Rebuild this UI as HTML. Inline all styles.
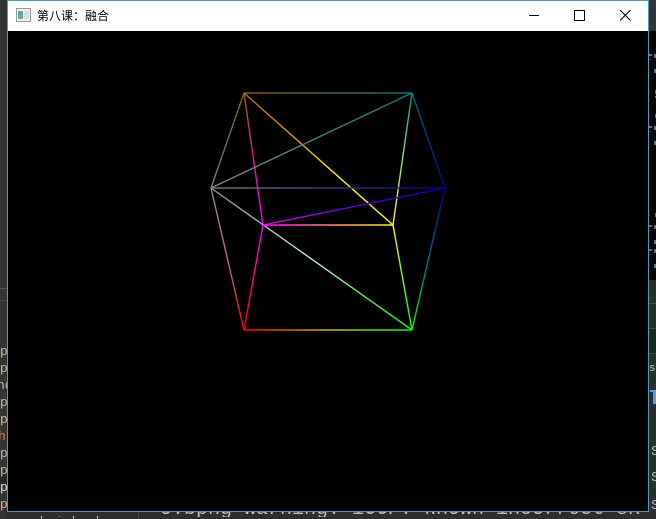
<!DOCTYPE html>
<html><head><meta charset="utf-8">
<style>
html,body{margin:0;padding:0;background:#2d2d2d;width:656px;height:519px;overflow:hidden;}
#w{position:relative;width:656px;height:519px;overflow:hidden;font-family:"Liberation Sans","Noto Sans CJK SC",sans-serif;}
.a{position:absolute;}
.m{font-family:"Liberation Mono",monospace;font-size:13px;line-height:14px;white-space:pre;}
</style></head>
<body>
<div id="w">
<div class="a" style="left:0;top:0;width:7px;height:519px;background:#333;"></div>
<div class="a" style="left:0;top:288px;width:7px;height:1px;background:#555;"></div>
<div class="a" style="left:0;top:300px;width:7px;height:1px;background:#4a4a4a;"></div>
<div class="a" style="left:0;top:470px;width:7px;height:17px;background:#262626;"></div>
<div class="a m" style="left:0;top:345px;color:#d0b898;">p</div>
<div class="a m" style="left:0;top:362px;color:#d0b898;">p</div>
<div class="a m" style="left:-3px;top:379px;color:#d0b898;">nd</div>
<div class="a m" style="left:0;top:396px;color:#d0b898;">p</div>
<div class="a m" style="left:0;top:413px;color:#d0b898;">p</div>
<div class="a m" style="left:-2px;top:430px;color:#c98a50;">h</div>
<div class="a m" style="left:0;top:447px;color:#d0b898;">p</div>
<div class="a m" style="left:0;top:464px;color:#d0b898;">p</div>
<div class="a m" style="left:0;top:481px;color:#f0e0c8;">p</div>
<div class="a m" style="left:0;top:498px;color:#d0b898;">p</div>

<div class="a" style="left:649px;top:0;width:7px;height:31px;background:#333;"></div>
<div class="a" style="left:649px;top:31px;width:7px;height:249px;background:#050505;"></div>
<div class="a" style="left:649px;top:280px;width:7px;height:239px;background:#2d2d2d;"></div>
<div class="a" style="left:649px;top:303px;width:7px;height:1px;background:#484848;"></div>
<div class="a" style="left:649px;top:328px;width:7px;height:25px;background:#242424;"></div>
<div class="a" style="left:649px;top:328px;width:7px;height:1px;background:#4a4a4a;"></div>
<div class="a" style="left:649px;top:353px;width:7px;height:1px;background:#484848;"></div>
<svg class="a" style="left:649px;top:31px;" width="7" height="249">
<g fill="#c03a80"><rect x="0" y="23" width="3" height="2"/><rect x="0" y="95" width="3" height="2"/><rect x="0" y="194" width="3" height="2"/><rect x="0" y="218" width="3" height="2"/></g>
<g fill="#702040"><rect x="0" y="28" width="2" height="1"/><rect x="0" y="100" width="2" height="1"/><rect x="0" y="199" width="2" height="1"/><rect x="0" y="223" width="2" height="1"/></g>
<g fill="#56788f"><rect x="5" y="23" width="2" height="4"/><rect x="5" y="38" width="2" height="4"/><rect x="6" y="59" width="1" height="4"/><rect x="6" y="65" width="1" height="2"/><rect x="6" y="83" width="1" height="4"/><rect x="5" y="95" width="2" height="4"/><rect x="5" y="110" width="2" height="4"/><rect x="6" y="182" width="1" height="4"/><rect x="5" y="194" width="2" height="4"/><rect x="5" y="209" width="2" height="4"/><rect x="5" y="218" width="2" height="4"/><rect x="5" y="233" width="2" height="4"/></g>
</svg>
<div class="a m" style="left:649px;top:362px;color:#c8c8c8;font-size:11px;">s</div>
<div class="a" style="left:650px;top:390px;width:6px;height:2px;background:#5a9fd0;"></div>
<div class="a" style="left:653px;top:390px;width:3px;height:14px;background:#5a9fd0;"></div>
<div class="a m" style="left:651px;top:445px;color:#b8b8b8;font-size:14px;">S</div>
<div class="a m" style="left:651px;top:471px;color:#b8b8b8;font-size:14px;">S</div>
<div class="a m" style="left:651px;top:499px;color:#b8b8b8;font-size:14px;">S</div>

<div class="a" style="left:150px;top:480px;width:490px;height:37px;overflow:hidden;">
<div class="a m" style="left:10px;top:18px;color:#c0c0c0;font-size:20px;line-height:24px;">o:bpng warning: iCCP: known incorrect sRGB</div>
</div>
<div class="a" style="left:41px;top:516px;width:1px;height:3px;background:#ccc;"></div>
<div class="a" style="left:59px;top:516px;width:1px;height:1px;background:#aaa;"></div>
<div class="a" style="left:73px;top:516px;width:1px;height:3px;background:#ccc;"></div>
<div class="a" style="left:97px;top:516px;width:1px;height:3px;background:#ccc;"></div>
<div class="a" style="left:138px;top:512px;width:1px;height:7px;background:#444;"></div>

<div class="a" style="left:7px;top:0;width:642px;height:512px;background:#4a9bc0;"></div>
<div class="a" style="left:8px;top:1px;width:640px;height:30px;background:#fff;"></div>
<div class="a" style="left:8px;top:31px;width:640px;height:480px;background:#000;"></div>

<svg class="a" style="left:16px;top:8px;" width="15" height="14">
<rect x="0.5" y="0.5" width="14" height="13" fill="#f2f2f2" stroke="#9a9a9a"/>
<rect x="2" y="3" width="5" height="8" fill="#5f9fb0"/>
<rect x="2" y="7" width="5" height="4" fill="#6fae80"/>
<rect x="8" y="3" width="5" height="8" fill="#d8dde0"/>
</svg>
<div class="a" style="left:37px;top:8px;font-size:12px;line-height:16px;color:#000;font-family:'Noto Sans CJK SC',sans-serif;white-space:nowrap;">第八课：融合</div>

<svg class="a" style="left:0;top:0;" width="656" height="31" fill="none" stroke="#000">
<path d="M529 15.5H539"/>
<rect x="574.5" y="10.5" width="10" height="10"/>
<path d="M620 10L630.5 20.5M630.5 10L620 20.5" stroke-width="1"/>
</svg>

<svg class="a" style="left:0;top:0;" width="656" height="519" fill="none" stroke-width="1.4">
<defs>
<linearGradient id="ab" gradientUnits="userSpaceOnUse" x1="244" y1="0" x2="412" y2="0"><stop offset="0" stop-color="#8a5c00"/><stop offset=".5" stop-color="#3f6a40"/><stop offset="1" stop-color="#0a7070"/></linearGradient>
<linearGradient id="ac" gradientUnits="userSpaceOnUse" x1="244" y1="93" x2="211" y2="188"><stop offset="0" stop-color="#8a5c0a"/><stop offset=".5" stop-color="#6a6a5a"/><stop offset="1" stop-color="#808080"/></linearGradient>
<linearGradient id="ae" gradientUnits="userSpaceOnUse" x1="244" y1="93" x2="263" y2="225"><stop offset="0" stop-color="#a05a10"/><stop offset=".45" stop-color="#e02080"/><stop offset="1" stop-color="#ff00ff"/></linearGradient>
<linearGradient id="af" gradientUnits="userSpaceOnUse" x1="244" y1="93" x2="393" y2="225"><stop offset="0" stop-color="#a86e00"/><stop offset=".35" stop-color="#e0a000"/><stop offset=".6" stop-color="#ffff00"/><stop offset="1" stop-color="#ffff00"/></linearGradient>
<linearGradient id="bc" gradientUnits="userSpaceOnUse" x1="412" y1="93" x2="211" y2="188"><stop offset="0" stop-color="#0e7a7a"/><stop offset=".5" stop-color="#4a8078"/><stop offset="1" stop-color="#808080"/></linearGradient>
<linearGradient id="bd" gradientUnits="userSpaceOnUse" x1="412" y1="93" x2="445" y2="188"><stop offset="0" stop-color="#006a7a"/><stop offset="1" stop-color="#000a80"/></linearGradient>
<linearGradient id="bf" gradientUnits="userSpaceOnUse" x1="412" y1="93" x2="393" y2="225"><stop offset="0" stop-color="#10907f"/><stop offset=".5" stop-color="#90e080"/><stop offset="1" stop-color="#ffff00"/></linearGradient>
<linearGradient id="cd" gradientUnits="userSpaceOnUse" x1="211" y1="0" x2="445" y2="0"><stop offset="0" stop-color="#777"/><stop offset=".5" stop-color="#3a3a70"/><stop offset="1" stop-color="#000090"/></linearGradient>
<linearGradient id="cg" gradientUnits="userSpaceOnUse" x1="211" y1="188" x2="244" y2="330"><stop offset="0" stop-color="#8a8a8a"/><stop offset=".5" stop-color="#c07070"/><stop offset="1" stop-color="#ff0000"/></linearGradient>
<linearGradient id="ch" gradientUnits="userSpaceOnUse" x1="211" y1="188" x2="412" y2="330"><stop offset="0" stop-color="#808080"/><stop offset=".5" stop-color="#c8f0c8"/><stop offset="1" stop-color="#00ff00"/></linearGradient>
<linearGradient id="de" gradientUnits="userSpaceOnUse" x1="445" y1="188" x2="263" y2="225"><stop offset="0" stop-color="#0000a0"/><stop offset=".5" stop-color="#6000e0"/><stop offset="1" stop-color="#ff00ff"/></linearGradient>
<linearGradient id="dh" gradientUnits="userSpaceOnUse" x1="445" y1="188" x2="412" y2="330"><stop offset="0" stop-color="#000090"/><stop offset=".5" stop-color="#006a80"/><stop offset="1" stop-color="#00ff00"/></linearGradient>
<linearGradient id="ef" gradientUnits="userSpaceOnUse" x1="263" y1="0" x2="393" y2="0"><stop offset="0" stop-color="#ff00ff"/><stop offset="1" stop-color="#ffff00"/></linearGradient>
<linearGradient id="eg" gradientUnits="userSpaceOnUse" x1="263" y1="225" x2="244" y2="330"><stop offset="0" stop-color="#ff00ff"/><stop offset="1" stop-color="#ff0000"/></linearGradient>
<linearGradient id="fh" gradientUnits="userSpaceOnUse" x1="393" y1="225" x2="412" y2="330"><stop offset="0" stop-color="#ffff00"/><stop offset="1" stop-color="#00ff00"/></linearGradient>
<linearGradient id="gh" gradientUnits="userSpaceOnUse" x1="244" y1="0" x2="412" y2="0"><stop offset="0" stop-color="#ff0000"/><stop offset=".5" stop-color="#c0c000"/><stop offset="1" stop-color="#00ff00"/></linearGradient>
</defs>
<path d="M244 93H412" stroke="url(#ab)"/>
<path d="M244 93L211 188" stroke="url(#ac)"/>
<path d="M244 93L263 225" stroke="url(#ae)"/>
<path d="M244 93L393 225" stroke="url(#af)"/>
<path d="M412 93L211 188" stroke="url(#bc)"/>
<path d="M412 93L445 188" stroke="url(#bd)"/>
<path d="M412 93L393 225" stroke="url(#bf)"/>
<path d="M211 188H445" stroke="url(#cd)"/>
<path d="M211 188L244 330" stroke="url(#cg)"/>
<path d="M211 188L412 330" stroke="url(#ch)"/>
<path d="M445 188L263 225" stroke="url(#de)"/>
<path d="M445 188L412 330" stroke="url(#dh)"/>
<path d="M263 225H393" stroke="url(#ef)"/>
<path d="M263 225L244 330" stroke="url(#eg)"/>
<path d="M393 225L412 330" stroke="url(#fh)"/>
<path d="M244 330H412" stroke="url(#gh)"/>
</svg>
</div>
</body></html>
